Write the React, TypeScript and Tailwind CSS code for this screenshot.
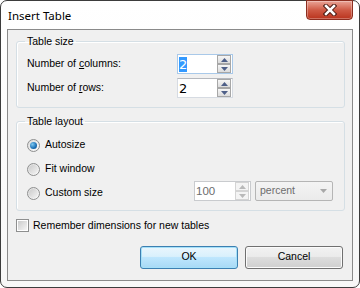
import React from "react";

const font = { fontFamily: '"Liberation Sans", Arial, sans-serif' };

function Arrow({ up, color }: { up: boolean; color: string }) {
  return (
    <svg width="7" height="4" viewBox="0 0 7 4">
      {up ? <polygon points="0,4 7,4 3.5,0" fill={color} /> : <polygon points="0,0 7,0 3.5,4" fill={color} />}
    </svg>
  );
}

function SpinButtons({ disabled }: { disabled?: boolean }) {
  const c = disabled ? "#b9b9b9" : "#4e5f88";
  const btn = disabled
    ? "flex-1 flex items-center justify-center border border-[#d4d4d4] bg-[#f4f4f4]"
    : "flex-1 flex items-center justify-center border border-[#a7a7a7] bg-gradient-to-b from-[#f6f6f6] to-[#dcdcdc]";
  return (
    <div className="flex flex-col w-[14px] h-[18px] mr-[1px]">
      <div className={btn}>
        <Arrow up color={c} />
      </div>
      <div className={btn}>
        <Arrow up={false} color={c} />
      </div>
    </div>
  );
}

function SpinBox({ value, focused, selected, disabled, w }: { value: string; focused?: boolean; selected?: boolean; disabled?: boolean; w: string }) {
  const border = focused
    ? "border-[#a9c9e9]"
    : disabled
    ? "border-[#c9cbce]"
    : "border-[#d6dbe2] border-t-[#b4b7bd]";
  return (
    <div className={`${w} h-[20px] flex items-center justify-between border ${border} bg-white`}>
      <div className="pl-[1px] text-[13px] leading-[15px] flex items-center" style={{ fontFamily: '"DejaVu Sans", sans-serif' }}>
        {selected ? (
          <span className="bg-[#3399ff] text-white">{value}</span>
        ) : (
          <span className={disabled ? "text-[#6d6d6d] text-[11.5px]" : "text-black"} style={disabled ? font : undefined}>{value}</span>
        )}
      </div>
      <SpinButtons disabled={disabled} />
    </div>
  );
}

function Radio({ checked }: { checked?: boolean }) {
  return (
    <div className="w-[13px] h-[13px] rounded-full border border-[#8e8f8f] bg-gradient-to-br from-[#dcdcdc] to-[#fbfbfb] flex items-center justify-center">
      {checked ? (
        <div className="w-[7px] h-[7px] rounded-full bg-[radial-gradient(circle_at_35%_35%,#7ec8f0,#1b6fb5_60%,#0d4f87)]" />
      ) : (
        <div className="w-[9px] h-[9px] rounded-full bg-gradient-to-br from-[#cbcbcb] to-[#f4f4f4]" />
      )}
    </div>
  );
}

export default function App() {
  return (
    <div className="w-[360px] h-[288px] bg-white" style={font}>
      <div className="relative w-[360px] h-[288px] border border-[#3c3c3c] rounded-[7px] bg-gradient-to-b from-white to-[#f7f7f7] flex flex-col">
        <div className="h-[28px] flex items-center pl-[7px] pt-[1px] text-[11.5px] text-black" style={{ fontFamily: '"Noto Sans", "Liberation Sans", sans-serif' }}>
          Insert Table
        </div>
        <div className="absolute left-[305px] top-[-1px] w-[47px] h-[20px] rounded-b-[4px] border border-[#8c2e20] bg-gradient-to-b from-[#e9a497] via-[#cf5a45] to-[#b9321c] flex items-center justify-center shadow-[inset_0_0_0_1px_rgba(255,255,255,0.3)]">
          <svg width="14" height="12" viewBox="0 0 14 12">
            <path d="M3 2 L11 10 M11 2 L3 10" stroke="#4a1a12" strokeWidth="4.5" strokeLinecap="square" />
            <path d="M3 2 L11 10 M11 2 L3 10" stroke="#ffffff" strokeWidth="2.5" strokeLinecap="square" />
          </svg>
        </div>
        <div className="mx-[6px] mb-[6px] flex-1 border border-[#8a8a8a] bg-[#f0f0f0] flex flex-col pl-[8px] pr-[7px] text-[10.5px] text-black">
          <fieldset className="mt-[5px] border border-[#d5dfe5] rounded-[3px] shadow-[inset_1px_1px_0_#ffffff] pl-[10px] pr-[10px] pt-[6px] pb-[9px]">
            <legend className="ml-[-2px] px-[2px] leading-[13px]">Table size</legend>
            <div className="flex flex-col gap-[4px]">
              <div className="flex items-center">
                <div className="w-[150px]">
                  Number of <span className="underline">c</span>olumns:
                </div>
                <SpinBox value="2" focused selected w="w-[56px]" />
              </div>
              <div className="flex items-center">
                <div className="w-[150px]">
                  Number of <span className="underline">r</span>ows:
                </div>
                <SpinBox value="2" w="w-[56px]" />
              </div>
            </div>
          </fieldset>
          <fieldset className="mt-[7px] border border-[#d5dfe5] rounded-[3px] shadow-[inset_1px_1px_0_#ffffff] pl-[10px] pr-[9px] pt-[7px] pb-[7px]">
            <legend className="ml-[-2px] px-[2px] leading-[13px]">Table layout</legend>
            <div className="flex flex-col gap-[4px]">
              <div className="flex items-center h-[20px] gap-[5px]">
                <Radio checked />
                <span>Autosize</span>
              </div>
              <div className="flex items-center h-[20px] gap-[5px]">
                <Radio />
                <span>Fit window</span>
              </div>
              <div className="flex items-center h-[20px]">
                <div className="flex items-center gap-[5px] w-[167px]">
                  <Radio />
                  <span>Custom size</span>
                </div>
                <div className="flex items-start gap-[4px] self-start mt-[-2px]">
                  <SpinBox value="100" disabled w="w-[57px]" />
                  <div className="w-[78px] h-[20px] rounded-[2px] border border-[#b5b5b5] bg-gradient-to-b from-[#f4f4f4] to-[#ebebeb] flex items-center justify-between pl-[4px] pr-[5px] text-[#6d6d6d]">
                    <span>percent</span>
                    <svg width="7" height="4" viewBox="0 0 7 4">
                      <polygon points="0,0 7,0 3.5,4" fill="#a8a8a8" />
                    </svg>
                  </div>
                </div>
              </div>
            </div>
          </fieldset>
          <div className="mt-[7px] flex items-center gap-[4px]">
            <div className="w-[13px] h-[13px] border border-[#8e8f8f] bg-white flex items-center justify-center">
              <div className="w-[9px] h-[9px] bg-gradient-to-br from-[#cbcbcb] to-[#f6f6f6]" />
            </div>
            <span>Remember dimensions for new tables</span>
          </div>
          <div className="mt-[12px] flex justify-end gap-[7px] pr-[2px]">
            <div className="w-[98px] h-[23px] rounded-[3px] border border-[#3c7fb1] bg-[linear-gradient(to_bottom,#eaf6fd_0%,#d9f0fc_45%,#bee6fd_50%,#a7d9f5_100%)] shadow-[inset_0_0_0_1px_#a5e0f8] flex items-center justify-center">
              OK
            </div>
            <div className="w-[98px] h-[23px] rounded-[3px] border border-[#707070] bg-[linear-gradient(to_bottom,#f2f2f2_0%,#ebebeb_45%,#dddddd_50%,#cfcfcf_100%)] shadow-[inset_0_0_0_1px_#fbfbfb] flex items-center justify-center">
              Cancel
            </div>
          </div>
        </div>
      </div>
    </div>
  );
}
